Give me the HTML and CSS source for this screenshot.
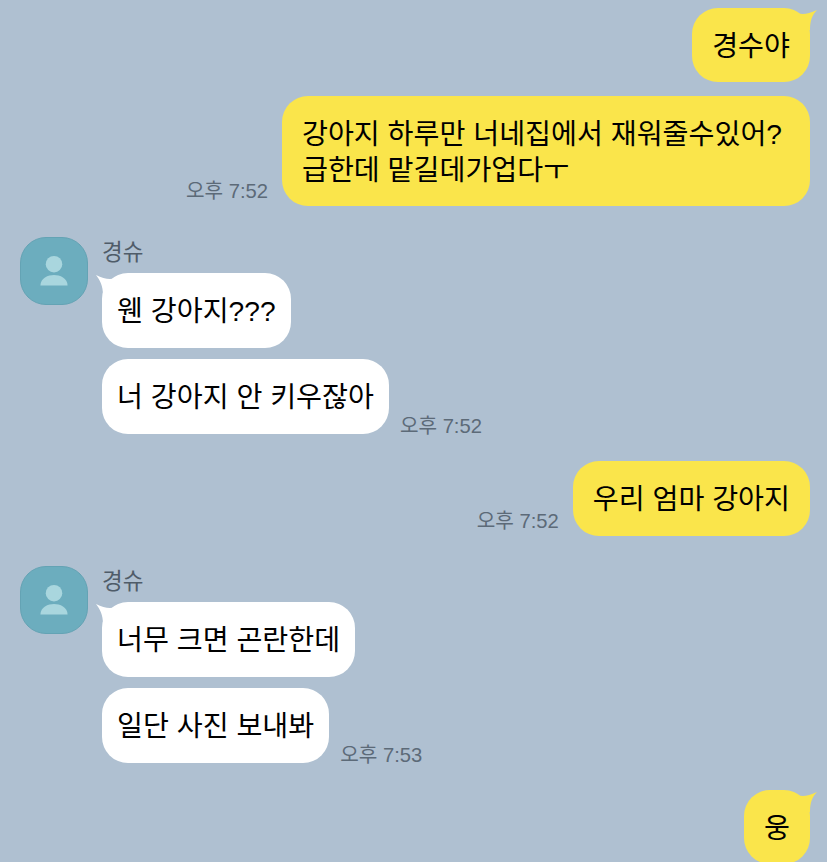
FILE: index.html
```html
<!DOCTYPE html>
<html lang="ko">
<head>
<meta charset="utf-8">
<title>채팅</title>
<link rel="stylesheet" href="styles.css">
</head>
<body>
<main class="chat">
  <div class="row out">
    <div class="bubble yellow">경수야
      <svg class="tail-r" viewBox="0 0 20 20"><path d="M0 3 C6 5 11 4 20 0 C15 5 13 11 13 20 L0 20 Z"/></svg>
    </div>
  </div>
  <div class="row out gap-14">
    <span class="time">오후 7:52</span>
    <div class="bubble yellow wide">강아지 하루만 너네집에서 재워줄수있어?<br>급한데 맡길데가업다ㅜ</div>
  </div>

  <section class="group gap-31">
    <div class="avatar">
      <svg viewBox="0 0 68 68"><circle cx="34" cy="27" r="8.5"/><path d="M20 49 C20 41 28 38 34 38 C40 38 48 41 48 49 Z"/></svg>
    </div>
    <div class="stack">
      <div class="name">경슈</div>
      <div class="line"><div class="bubble white">웬 강아지???
        <svg class="tail-l" viewBox="0 0 20 20"><path d="M20 3 C14 5 8 4 0 0 C4 5 7 11 7 20 L20 20 Z"/></svg>
      </div></div>
      <div class="line"><div class="bubble white">너 강아지 안 키우잖아</div><span class="time">오후 7:52</span></div>
    </div>
  </section>

  <div class="row out gap-27">
    <span class="time">오후 7:52</span>
    <div class="bubble yellow tall">우리 엄마 강아지</div>
  </div>

  <section class="group gap-30">
    <div class="avatar">
      <svg viewBox="0 0 68 68"><circle cx="34" cy="27" r="8.5"/><path d="M20 49 C20 41 28 38 34 38 C40 38 48 41 48 49 Z"/></svg>
    </div>
    <div class="stack">
      <div class="name">경슈</div>
      <div class="line"><div class="bubble white">너무 크면 곤란한데
        <svg class="tail-l" viewBox="0 0 20 20"><path d="M20 3 C14 5 8 4 0 0 C4 5 7 11 7 20 L20 20 Z"/></svg>
      </div></div>
      <div class="line"><div class="bubble white">일단 사진 보내봐</div><span class="time">오후 7:53</span></div>
    </div>
  </section>

  <div class="row out gap-27">
    <div class="bubble yellow">웅
      <svg class="tail-r" viewBox="0 0 20 20"><path d="M0 3 C6 5 11 4 20 0 C15 5 13 11 13 20 L0 20 Z"/></svg>
    </div>
  </div>
</main>
</body>
</html>
```

FILE: styles.css
```css
* { box-sizing: border-box; }
html, body { margin: 0; height: 100%; }
body {
  background: #afc0d1;
  font-family: "Liberation Sans", "Noto Sans CJK KR", sans-serif;
  overflow: hidden;
}
.chat { padding: 8px 17px 0 20px; }
.row { display: flex; align-items: flex-end; }
.out { justify-content: flex-end; gap: 14px; }
.out .time { margin-bottom: 2px; }
.gap-14 { margin-top: 14px; }
.gap-27 { margin-top: 27px; }
.gap-30 { margin-top: 30px; }
.gap-31 { margin-top: 31px; }
.bubble {
  position: relative;
  padding: 20px 20px 18px;
  border-radius: 26px;
  font-size: 28.2px;
  line-height: 36px;
  color: #000;
  white-space: nowrap;
}
.yellow { background: #fae54b; }
.wide { padding-right: 28px; }
.tall { padding-bottom: 19px; }
.white { background: #fff; padding: 20px 15px 19px; }
.tail-r, .tail-l { position: absolute; width: 20px; height: 20px; }
.tail-r { right: -7px; top: 2px; fill: #fae54b; }
.tail-l { left: -6px; top: 2px; fill: #fff; }
.time {
  font-size: 20.2px;
  line-height: 26px;
  color: #5c6a78;
  white-space: nowrap;
}
.group { display: flex; gap: 14px; align-items: flex-start; }
.avatar {
  width: 68px;
  height: 68px;
  border-radius: 26px;
  background: #6cadbe;
  border: 1px solid #64a3b4;
  flex: none;
}
.avatar svg { display: block; width: 66px; height: 66px; fill: #a9d6de; }
.stack { display: flex; flex-direction: column; gap: 11px; }
.name {
  font-size: 22.5px;
  line-height: 28px;
  color: #4f5c69;
  margin-top: 2px;
  margin-bottom: -5px;
}
.line { display: flex; align-items: flex-end; gap: 11px; }
.line .time { margin-bottom: -5px; }
```
